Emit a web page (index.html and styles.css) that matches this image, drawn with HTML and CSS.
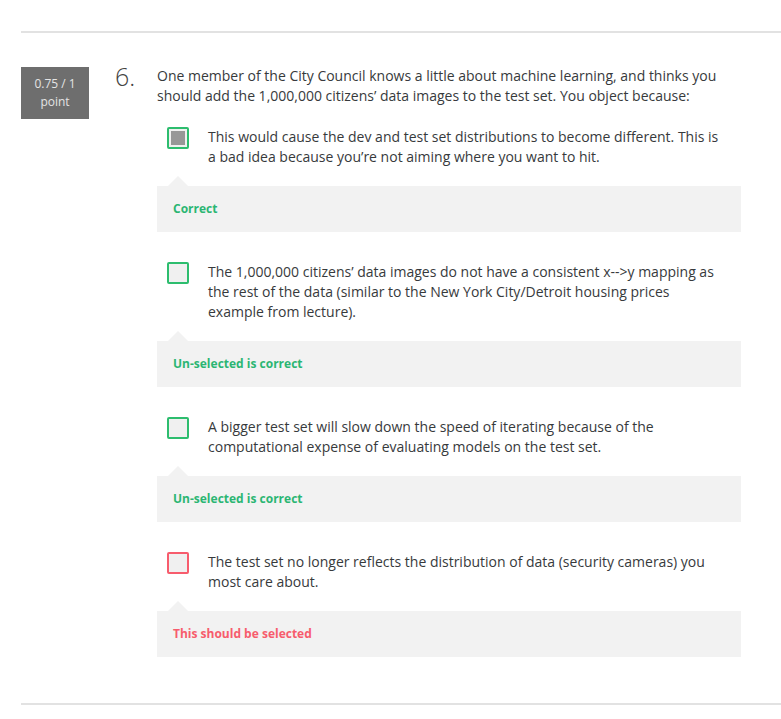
FILE: index.html
```html
<!DOCTYPE html>
<html>
<head>
<meta charset="utf-8">
<link rel="stylesheet" href="styles.css">
</head>
<body>
<div class="question">
  <div class="q-row">
    <div class="points">0.75 / 1<br>point</div>
    <div class="q-num">6.</div>
    <div class="q-body">
      <p class="q-text">One member of the City Council knows a little about machine learning, and thinks you should add the 1,000,000 citizens’ data images to the test set. You object because:</p>

      <div class="option">
        <div class="opt-row">
          <span class="box box-green box-checked"><span class="fill"></span></span>
          <span class="opt-text">This would cause the dev and test set distributions to become different. This is a bad idea because you’re not aiming where you want to hit.</span>
        </div>
        <div class="feedback fb-green">Correct</div>
      </div>

      <div class="option">
        <div class="opt-row">
          <span class="box box-green"></span>
          <span class="opt-text">The 1,000,000 citizens’ data images do not have a consistent x--&gt;y mapping as the rest of the data (similar to the New York City/Detroit housing prices example from lecture).</span>
        </div>
        <div class="feedback fb-green">Un-selected is correct</div>
      </div>

      <div class="option">
        <div class="opt-row">
          <span class="box box-green"></span>
          <span class="opt-text">A bigger test set will slow down the speed of iterating because of the computational expense of evaluating models on the test set.</span>
        </div>
        <div class="feedback fb-green">Un-selected is correct</div>
      </div>

      <div class="option">
        <div class="opt-row">
          <span class="box box-red"></span>
          <span class="opt-text">The test set no longer reflects the distribution of data (security cameras) you most care about.</span>
        </div>
        <div class="feedback fb-red">This should be selected</div>
      </div>
    </div>
  </div>
</div>
</body>
</html>
```

FILE: styles.css
```css
html, body {
  margin: 0;
  padding: 0;
  background: #fff;
}
body {
  font-family: "Open Sans", "Liberation Sans", sans-serif;
  color: #373a3c;
  font-size: 14px;
  line-height: 20px;
  width: 781px;
  overflow: hidden;
}
.question {
  margin: 31px 0 0 21px;
  border-top: 2px solid #e2e2e2;
  border-bottom: 2px solid #e2e2e2;
  width: 760px;
  padding: 33px 0 46px 0;
}
.q-row {
  display: flex;
  align-items: flex-start;
}
.points {
  width: 68px;
  height: 52px;
  margin-top: 1px;
  background: #6e6e6e;
  color: #e4e4e4;
  font-size: 12px;
  line-height: 18px;
  text-align: center;
  box-sizing: border-box;
  padding-top: 8px;
  flex: none;
}
.q-num {
  width: 42px;
  margin-left: 26px;
  font-size: 25px;
  font-weight: 300;
  line-height: 18px;
  color: #444;
  padding-top: 1px;
  flex: none;
}
.q-body {
  width: 584px;
  flex: none;
}
.q-text {
  margin: 0;
}
.option {
  margin-top: 21px;
}
.option + .option {
  margin-top: 30px;
}
.opt-row {
  display: flex;
  align-items: flex-start;
  padding-left: 10px;
}
.box {
  width: 22px;
  height: 22px;
  box-sizing: border-box;
  border: 2px solid #2dbd6e;
  border-radius: 2px;
  background: #f0f0f0;
  flex: none;
  padding: 2px;
  display: block;
}
.box-red {
  border-color: #f75c6d;
}
.fill {
  display: block;
  width: 100%;
  height: 100%;
  background: #979797;
}
.opt-text {
  margin-left: 19px;
  width: 516px;
}
.feedback {
  position: relative;
  margin-top: 19px;
  height: 46px;
  box-sizing: border-box;
  background: #f2f2f2;
  padding: 14px 16px;
  font-size: 12px;
  font-weight: 700;
  line-height: 18px;
}
.feedback::before {
  content: "";
  position: absolute;
  left: 11px;
  top: -10px;
  border-left: 10px solid transparent;
  border-right: 10px solid transparent;
  border-bottom: 10px solid #f2f2f2;
}
.fb-green {
  color: #2bb673;
}
.fb-red {
  color: #f75c6d;
}
```
